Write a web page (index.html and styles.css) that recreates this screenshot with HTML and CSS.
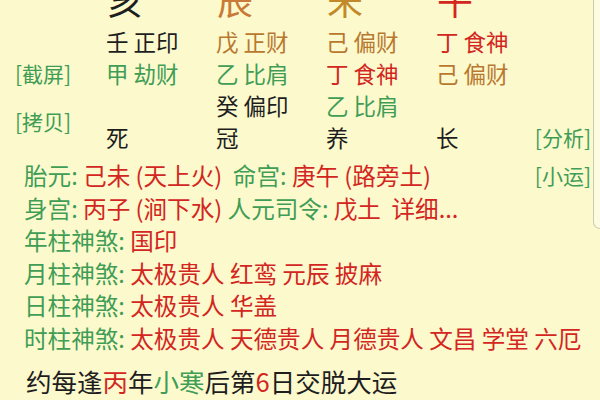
FILE: index.html
```html
<!DOCTYPE html>
<html lang="zh">
<head>
<meta charset="utf-8">
<link rel="stylesheet" href="styles.css">
</head>
<body>
<div class="page">
  <div class="edge"></div>
  <div class="pillars">
    <div class="big c-black col1">亥</div>
    <div class="big c-orange col2">辰</div>
    <div class="big c-gold col3">未</div>
    <div class="big c-red col4">午</div>

    <div class="cell c-black r2 col1">壬 正印</div>
    <div class="cell c-brown r2 col2">戊 正财</div>
    <div class="cell c-brown r2 col3">己 偏财</div>
    <div class="cell c-red r2 col4">丁 食神</div>

    <div class="side c-green r3 left">[截屏]</div>
    <div class="cell c-green r3 col1">甲 劫财</div>
    <div class="cell c-green r3 col2">乙 比肩</div>
    <div class="cell c-red r3 col3">丁 食神</div>
    <div class="cell c-brown r3 col4">己 偏财</div>

    <div class="side c-green r45 left">[拷贝]</div>
    <div class="cell c-black r4 col2">癸 偏印</div>
    <div class="cell c-green r4 col3">乙 比肩</div>

    <div class="cell c-black r5 col1">死</div>
    <div class="cell c-black r5 col2">冠</div>
    <div class="cell c-black r5 col3">养</div>
    <div class="cell c-black r5 col4">长</div>
    <div class="side c-green r5 right">[分析]</div>
  </div>

  <div class="info">
    <div class="line split">
      <span><span class="c-green">胎元: </span><span class="c-red">己未 (天上火)</span>&nbsp; <span class="c-green">命宫: </span><span class="c-red">庚午 (路旁土)</span></span>
      <span class="c-green side-inline">[小运]</span>
    </div>
    <div class="line"><span class="c-green">身宫: </span><span class="c-red">丙子 (涧下水)</span> <span class="c-green">人元司令: </span><span class="c-red">戊土&nbsp; 详细...</span></div>
    <div class="line"><span class="c-green">年柱神煞: </span><span class="c-red">国印</span></div>
    <div class="line"><span class="c-green">月柱神煞: </span><span class="c-red">太极贵人 红鸾 元辰 披麻</span></div>
    <div class="line"><span class="c-green">日柱神煞: </span><span class="c-red">太极贵人 华盖</span></div>
    <div class="line"><span class="c-green">时柱神煞: </span><span class="c-red">太极贵人 天德贵人 月德贵人 文昌 学堂 六厄</span></div>
  </div>

  <div class="yun">约每逢<span class="c-red">丙</span>年<span class="c-green">小寒</span>后第<span class="c-red">6</span>日交脱大运</div>
</div>
</body>
</html>
```

FILE: styles.css
```css
html, body {
  margin: 0;
  padding: 0;
  background: #fcf9cd;
}
body {
  width: 600px;
  height: 400px;
  overflow: hidden;
  font-family: "Noto Sans CJK SC", "Noto Sans", sans-serif;
}
.page {
  position: relative;
  width: 600px;
  height: 400px;
  overflow: hidden;
}
.edge {
  position: absolute;
  left: 593px;
  top: -10px;
  width: 20px;
  height: 238px;
  border-left: 1px solid #cfcbb3;
  border-bottom: 1px solid #cfcbb3;
  border-bottom-left-radius: 7px;
  background: #fdfbe0;
}
.pillars {
  display: grid;
  grid-template-columns: 106px 110px 110px 110px 1fr;
  grid-template-rows: 52px 32px 32px 32px 32px;
  margin-top: -27px;
  padding-right: 9px;
  font-size: 22.5px;
  line-height: 32px;
}
.big {
  grid-row: 1;
  font-size: 36px;
  line-height: 52px;
  padding-left: 1px;
}
.cell { white-space: pre; }
.r2 { grid-row: 2; }
.r3 { grid-row: 3; }
.r4 { grid-row: 4; }
.r5 { grid-row: 5; }
.r45 { grid-row: 4 / span 2; align-self: center; }
.col1 { grid-column: 2; }
.col2 { grid-column: 3; }
.col3 { grid-column: 4; }
.col4 { grid-column: 5; }
.side { font-size: 21px; }
.left { grid-column: 1; padding-left: 15px; }
.right { grid-column: 5; justify-self: end; }
.info {
  margin-top: 6px;
  padding-left: 24px;
  padding-right: 9px;
  font-size: 23.6px;
  line-height: 32.5px;
}
.line { white-space: pre; }
.split {
  display: flex;
  justify-content: space-between;
}
.side-inline { font-size: 21px; }
.yun {
  margin-top: 10px;
  padding-left: 26px;
  font-size: 25.5px;
  line-height: 34px;
  color: #1e1e1e;
}
.c-black { color: #1e1e1e; }
.c-green { color: #3f9d55; }
.c-red { color: #d2261f; }
.c-brown { color: #b8782f; }
.c-orange { color: #c87a36; }
.c-gold { color: #c2892a; }
```
